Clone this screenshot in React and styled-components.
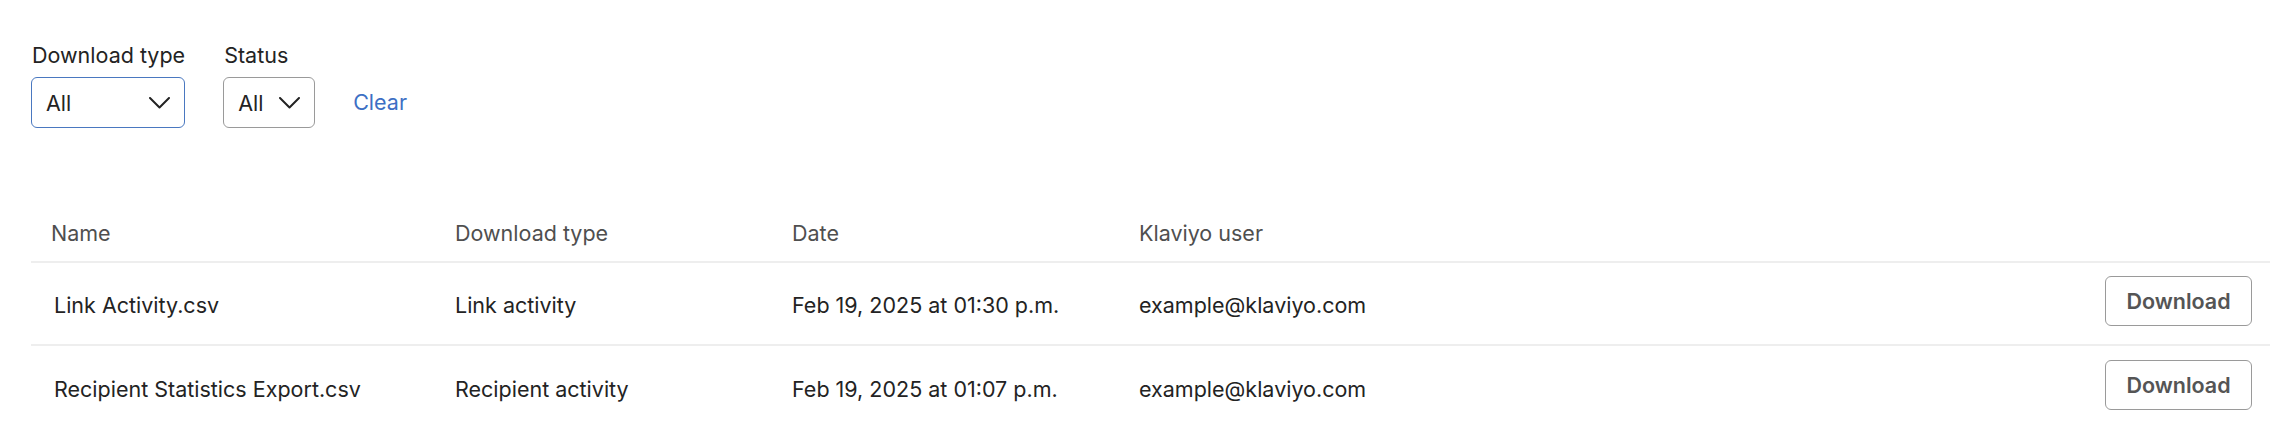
import React from 'react';
import styled, { createGlobalStyle } from 'styled-components';

const GlobalStyle = createGlobalStyle`
  body {
    margin: 0;
    background: #ffffff;
    font-family: Inter, "Noto Sans", sans-serif;
    color: #232323;
  }
`;

const Page = styled.div`
  padding: 42px 18px 0 31px;
`;

const Filters = styled.div`
  display: flex;
  align-items: flex-end;
  gap: 38px;
`;

const Field = styled.div`
  display: flex;
  flex-direction: column;
  gap: 9px;
`;

const Label = styled.label`
  font-size: 21.5px;
  line-height: 26px;
  color: #232323;
  padding-left: 1px;
`;

const Select = styled.div`
  box-sizing: border-box;
  display: flex;
  align-items: center;
  justify-content: space-between;
  width: ${p => p.$width}px;
  height: 51px;
  padding: 0 14px 0 14px;
  border: 1px solid ${p => (p.$focused ? '#4a78c0' : '#9a9a9a')};
  border-radius: 6px;
  font-size: 21.5px;
  color: #232323;
`;

const ClearLink = styled.a`
  font-size: 21.5px;
  color: #3d6fc4;
  line-height: 51px;
  cursor: pointer;
`;

const Table = styled.div`
  margin-top: 77px;
`;

const Row = styled.div`
  display: grid;
  grid-template-columns: 404px 337px 347px 1fr auto;
  align-items: center;
  height: ${p => (p.$head ? 58 : 83)}px;
  padding: ${p => (p.$head ? '0' : '2px')} 18px 0 ${p => (p.$head ? 20 : 23)}px;
  border-bottom: ${p => (p.$last ? 'none' : '2px solid #eeeeee')};
  box-sizing: border-box;
`;

const Cell = styled.div`
  font-size: 21.5px;
  color: ${p => (p.$head ? '#4f4f4f' : '#232323')};
  white-space: nowrap;
  margin-left: ${p => (p.$shift ? -3 : 0)}px;
`;

const DownloadButton = styled.button`
  box-sizing: border-box;
  width: 147px;
  height: 50px;
  background: #fff;
  border: 1px solid #9a9a9a;
  border-radius: 6px;
  font-family: Inter, "Noto Sans", sans-serif;
  font-size: 21.5px;
  font-weight: 600;
  color: #555555;
  margin-top: -8px;
`;

const Chevron = () => (
  <svg width="21" height="12" viewBox="0 0 21 12" fill="none">
    <path d="M1 1 L10.5 10.5 L20 1" stroke="#232323" strokeWidth="2" strokeLinecap="round" strokeLinejoin="round" />
  </svg>
);

const rows = [
  { name: 'Link Activity.csv', type: 'Link activity', date: 'Feb 19, 2025 at 01:30 p.m.', user: 'example@klaviyo.com' },
  { name: 'Recipient Statistics Export.csv', type: 'Recipient activity', date: 'Feb 19, 2025 at 01:07 p.m.', user: 'example@klaviyo.com' }
];

const App = () => {
  return (
    <Page>
      <GlobalStyle />
      <Filters>
        <Field>
          <Label>Download type</Label>
          <Select $width={154} $focused>
            <span>All</span>
            <Chevron />
          </Select>
        </Field>
        <Field>
          <Label>Status</Label>
          <Select $width={92}>
            <span>All</span>
            <Chevron />
          </Select>
        </Field>
        <ClearLink>Clear</ClearLink>
      </Filters>
      <Table>
        <Row $head>
          <Cell $head>Name</Cell>
          <Cell $head>Download type</Cell>
          <Cell $head>Date</Cell>
          <Cell $head>Klaviyo user</Cell>
          <span />
        </Row>
        {rows.map((r, i) => (
          <Row key={r.name} $last={i === rows.length - 1}>
            <Cell>{r.name}</Cell>
            <Cell $shift>{r.type}</Cell>
            <Cell $shift>{r.date}</Cell>
            <Cell $shift>{r.user}</Cell>
            <DownloadButton>Download</DownloadButton>
          </Row>
        ))}
      </Table>
    </Page>
  );
};

export default App;
